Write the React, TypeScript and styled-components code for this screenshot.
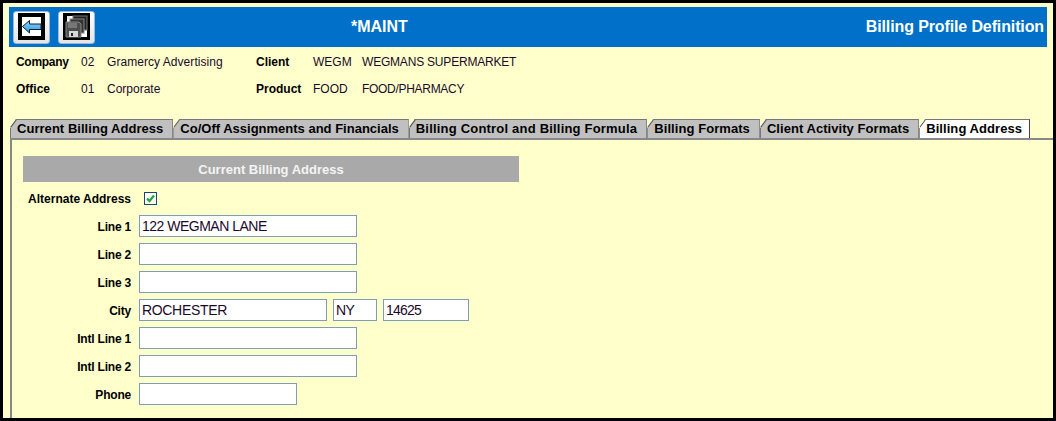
import React from "react";
import styled, { createGlobalStyle } from "styled-components";

const Global = createGlobalStyle`
  html, body { margin: 0; padding: 0; background: #000; }
`;

const Frame = styled.div`
  box-sizing: border-box;
  width: 1056px;
  height: 421px;
  border: 3px solid #000;
  background: #ffffcc;
  font-family: "Liberation Sans", Arial, sans-serif;
  color: #000;
  overflow: hidden;
  padding: 4px 6px 0 6px;
  font-size: 12px;
`;

const Header = styled.div`
  height: 40px;
  background: #0070c8;
  display: grid;
  grid-template-columns: 338px auto 1fr;
  align-items: center;
  padding: 0 3px 0 4px;
`;

const ButtonRow = styled.div`
  display: flex;
  gap: 8px;
`;

const IconButton = styled.div`
  box-sizing: border-box;
  width: 37px;
  height: 33px;
  background: linear-gradient(#ffffff, #e4e4e4);
  border: 1px solid #9db8d8;
  border-radius: 3px;
  display: flex;
  justify-content: center;
  padding-top: 1px;
`;

const HeaderTitle = styled.div`
  color: #fff;
  font-weight: bold;
  font-size: 16px;
`;

const HeaderRight = styled.div`
  color: #fff;
  font-weight: bold;
  font-size: 16px;
  letter-spacing: -0.12px;
  text-align: right;
`;

const InfoGrid = styled.div`
  display: grid;
  grid-template-columns: 65px 26px 149px 57px 49px 1fr;
  grid-auto-rows: 27px;
  padding: 1px 0 0 7px;
  height: 71px;
  box-sizing: border-box;
  align-items: center;
`;

const InfoLabel = styled.div<{ $track?: number }>`
  font-weight: bold;
  font-size: 12px;
  letter-spacing: ${(p) => p.$track ?? 0}px;
`;

const InfoValue = styled.div<{ $track?: number }>`
  font-size: 12px;
  color: #1a0a2a;
  letter-spacing: ${(p) => p.$track ?? 0}px;
`;

const Tabs = styled.div`
  display: flex;
  height: 19px;
  padding-left: 1px;
  margin-top: 1px;
`;

const Tab = styled.div<{ $active?: boolean; $track?: number }>`
  box-sizing: border-box;
  position: relative;
  height: 19px;
  padding: 1px ${(p) => (p.$active ? 7 : 9)}px 0 7px;
  font-weight: bold;
  font-size: 13px;
  line-height: 15px;
  letter-spacing: ${(p) => p.$track ?? 0.05}px;
  white-space: nowrap;
  background: ${(p) => (p.$active ? "#fff" : "#c0c0c0")};
  border-top: 1px solid #777;
  border-right: 1px solid ${(p) => (p.$active ? "#444" : "#888")};
  clip-path: polygon(0 100%, 0 8px, 6px 0, 100% 0, 100% 100%);
  &::before {
    content: "";
    position: absolute;
    left: 0;
    top: 8px;
    bottom: 0;
    width: 1px;
    background: #777;
  }
  &::after {
    content: "";
    position: absolute;
    left: -1px;
    top: 3px;
    width: 9px;
    height: 1px;
    background: #555;
    transform: rotate(-53deg);
  }
`;

const Panel = styled.div`
  box-sizing: border-box;
  height: 282px;
  margin-left: 1px;
  margin-right: -6px;
  border-top: 2px solid #888;
  border-left: 2px solid #888;
  padding: 16px 0 0 11px;
`;

const SectionBar = styled.div`
  width: 496px;
  height: 26px;
  background: #a9a9a9;
  color: #f4f4f4;
  font-weight: bold;
  font-size: 13px;
  line-height: 27px;
  text-align: center;
`;

const Form = styled.div`
  display: grid;
  grid-template-columns: 108px 1fr;
  grid-auto-rows: 28px;
  align-items: center;
  column-gap: 8px;
  margin-top: 2px;
`;

const FormLabel = styled.div<{ $track?: number }>`
  font-weight: bold;
  font-size: 12px;
  text-align: right;
  padding-top: 1px;
  letter-spacing: ${(p) => p.$track ?? -0.2}px;
`;

const Fields = styled.div`
  display: flex;
  gap: 6px;
  align-items: center;
`;

const Field = styled.div<{ $w: number; $track?: number }>`
  box-sizing: border-box;
  width: ${(p) => p.$w}px;
  height: 22px;
  background: #fff;
  border: 1px solid #7f9db9;
  font-size: 14px;
  line-height: 21px;
  padding-left: 2px;
  color: #1a0a2a;
  letter-spacing: ${(p) => p.$track ?? -0.5}px;
  white-space: nowrap;
`;

const Check = styled.div`
  box-sizing: border-box;
  width: 13px;
  height: 13px;
  margin: 0 0 0 5px;
  background: #fdfdf0;
  border: 1px solid #1c4478;
  display: flex;
  align-items: center;
  justify-content: center;
`;

const BackIcon = () => (
  <svg width="27" height="27" viewBox="0 0 27 27">
    <defs>
      <linearGradient id="arrowFill" x1="0" y1="0" x2="0" y2="1">
        <stop offset="0" stopColor="#8fd4fa" />
        <stop offset="1" stopColor="#2f98e4" />
      </linearGradient>
    </defs>
    <rect width="27" height="27" fill="#000" />
    <rect x="4" y="4" width="19" height="19" fill="#fff" />
    <path d="M4.5 13.5 L11.5 7.5 V11 H23 V16.5 H11.5 V20 Z" fill="url(#arrowFill)" stroke="#123" strokeWidth="1" />
  </svg>
);

const SaveIcon = () => (
  <svg width="27" height="27" viewBox="0 0 27 27">
    <rect width="27" height="27" fill="#000" />
    <rect x="4" y="3" width="20" height="21" fill="#fff" />
    <rect x="4" y="3" width="3" height="3" fill="#e8e8e8" />
    <rect x="10" y="3" width="14" height="14" fill="#222" stroke="#777" />
    <rect x="7" y="6" width="14" height="14" fill="#333" stroke="#888" />
    <path d="M3 9 H16 L18 11 V24 H3 Z" fill="#4e4e4e" stroke="#888" />
    <rect x="5" y="10" width="9" height="5" fill="#777" />
    <rect x="6" y="18" width="9" height="6" fill="#d8d8d8" />
    <rect x="8" y="20" width="2" height="3" fill="#222" />
  </svg>
);

const tabs: { label: string; track?: number }[] = [
  { label: "Current Billing Address", track: 0.04 },
  { label: "Co/Off Assignments and Financials", track: 0 },
  { label: "Billing Control and Billing Formula", track: 0.2 },
  { label: "Billing Formats", track: 0.07 },
  { label: "Client Activity Formats", track: 0.05 },
];

export default function App() {
  return (
    <>
      <Global />
      <Frame>
        <Header>
          <ButtonRow>
            <IconButton><BackIcon /></IconButton>
            <IconButton><SaveIcon /></IconButton>
          </ButtonRow>
          <HeaderTitle>*MAINT</HeaderTitle>
          <HeaderRight>Billing Profile Definition</HeaderRight>
        </Header>
        <InfoGrid>
          <InfoLabel $track={-0.3}>Company</InfoLabel>
          <InfoValue>02</InfoValue>
          <InfoValue $track={0.05}>Gramercy Advertising</InfoValue>
          <InfoLabel>Client</InfoLabel>
          <InfoValue>WEGM</InfoValue>
          <InfoValue $track={-0.2}>WEGMANS SUPERMARKET</InfoValue>
          <InfoLabel>Office</InfoLabel>
          <InfoValue>01</InfoValue>
          <InfoValue>Corporate</InfoValue>
          <InfoLabel>Product</InfoLabel>
          <InfoValue>FOOD</InfoValue>
          <InfoValue $track={-0.3}>FOOD/PHARMACY</InfoValue>
        </InfoGrid>
        <Tabs>
          {tabs.map((t) => (
            <Tab key={t.label} $track={t.track}>{t.label}</Tab>
          ))}
          <Tab $active $track={0.07}>Billing Address</Tab>
        </Tabs>
        <Panel>
          <SectionBar>Current Billing Address</SectionBar>
          <Form>
            <FormLabel $track={0}>Alternate Address</FormLabel>
            <Fields>
              <Check>
                <svg width="11" height="11" viewBox="0 0 11 11">
                  <path d="M2 5.5 L4.5 8 L9 2.5" fill="none" stroke="#1fa546" strokeWidth="2.2" />
                </svg>
              </Check>
            </Fields>
            <FormLabel>Line 1</FormLabel>
            <Fields><Field $w={218}>122 WEGMAN LANE</Field></Fields>
            <FormLabel>Line 2</FormLabel>
            <Fields><Field $w={218} /></Fields>
            <FormLabel>Line 3</FormLabel>
            <Fields><Field $w={218} /></Fields>
            <FormLabel>City</FormLabel>
            <Fields>
              <Field $w={188} $track={-0.33}>ROCHESTER</Field>
              <Field $w={44}>NY</Field>
              <Field $w={86} $track={-0.8}>14625</Field>
            </Fields>
            <FormLabel>Intl Line 1</FormLabel>
            <Fields><Field $w={218} /></Fields>
            <FormLabel>Intl Line 2</FormLabel>
            <Fields><Field $w={218} /></Fields>
            <FormLabel>Phone</FormLabel>
            <Fields><Field $w={158} /></Fields>
          </Form>
        </Panel>
      </Frame>
    </>
  );
}
